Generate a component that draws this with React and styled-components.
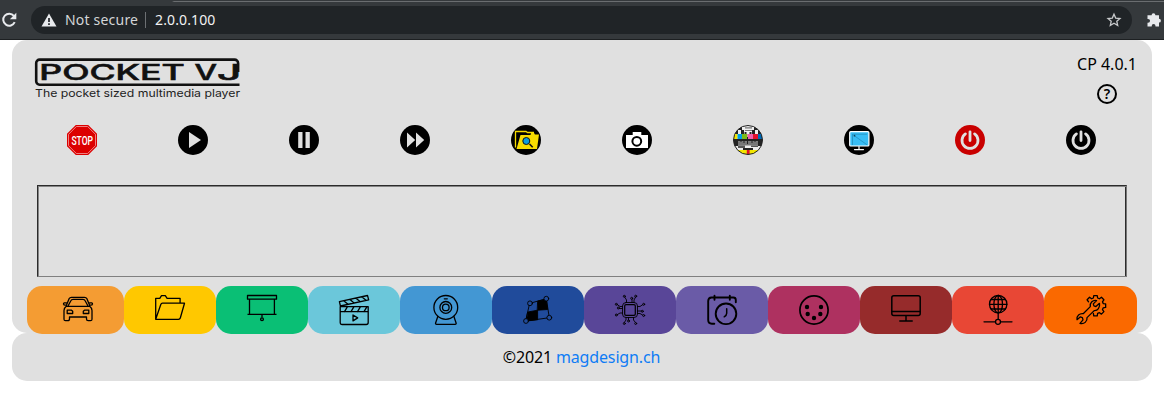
import React from "react";
import styled, { createGlobalStyle } from "styled-components";

const GlobalStyle = createGlobalStyle`
  * { box-sizing: border-box; }
  body { margin: 0; background: #fff; color: #000; font-family: "Noto Sans", "Open Sans", sans-serif; font-size: 16px; }
  svg { display: block; flex: none; overflow: visible; }
`;

const BrowserBar = styled.div`
  height: 40px;
  display: flex;
  align-items: flex-start;
  padding-top: 6px;
  background: linear-gradient(to right, #35393c 172px, #6a6d70 174px) 0 1px / 100% 1px no-repeat, #35393c;
  border-bottom: 1px solid #1d2022;
  color: #e8eaed;
`;
const ReloadSlot = styled.div`
  width: 31px;
  padding: 5px 0 0 0;
`;
const AddressPill = styled.div`
  width: 1101px;
  height: 28px;
  border-radius: 14px;
  background: #202427;
  display: flex;
  align-items: center;
  padding: 0 11px 0 10px;
  font-size: 14px;
  line-height: 28px;
`;
const Security = styled.span`
  width: 73px;
  margin-left: 8px;
  letter-spacing: 0.2px;
  color: #d3d5d7;
  white-space: nowrap;
`;
const Divider = styled.span`
  width: 1px;
  height: 16px;
  margin: 0 9px 0 7px;
  background: #6d7073;
`;
const Address = styled.span`
  flex: 1;
  letter-spacing: 0.12px;
  color: #f1f2f3;
`;
const ExtensionSlot = styled.div`
  padding: 6px 0 0 14px;
`;

const Page = styled.main`
  margin: 0 12px;
`;
const Panel = styled.section`
  height: 293px;
  border-radius: 15px;
  background: #e0e0e0;
  padding: 0 15px;
`;
const Header = styled.header`
  height: 85px;
  display: flex;
  justify-content: space-between;
  padding: 18px 0 0 8px;
`;
const Info = styled.div`
  display: flex;
  flex-direction: column;
  align-items: flex-end;
  margin-top: -5px;
  line-height: 22px;
`;
const HelpButton = styled.button`
  margin: 9px 20px 0 0;
  padding: 0;
  border: 0;
  background: none;
`;
const Toolbar = styled.nav`
  width: 1110px;
  margin-left: -0.5px;
  display: grid;
  grid-template-columns: repeat(10, 1fr);
  justify-items: center;
`;
const ToolButton = styled.button`
  width: 30px;
  height: 30px;
  padding: 0;
  border: 0;
  background: none;
`;
const Screen = styled.div`
  width: 1090px;
  height: 92px;
  margin: 30px 0 9px 10px;
  border-style: solid;
  border-width: 1px;
  border-color: #2c2c2c #777 #808080 #2c2c2c;
  box-shadow: inset 1px 1px 0 #858585, inset -1px 0 0 #2c2c2c;
`;
const Tabs = styled.nav`
  position: relative;
  z-index: 1;
  width: 1110px;
  display: flex;
`;
const Tab = styled.button`
  flex: 0 0 ${(p) => p.$width || 92}px;
  height: 48px;
  display: flex;
  justify-content: center;
  padding: 9px 0 0 ${(p) => p.$inset || 0}px;
  border: 0;
  border-radius: 15px;
  background: ${(p) => p.$color};
`;
const Footer = styled.footer`
  height: 48px;
  border-radius: 15px;
  background: #e0e0e0;
  text-align: center;
  line-height: 48px;
  letter-spacing: -0.15px;
  padding-right: 1px;
`;
const Link = styled.a`
  color: #0f7cf5;
  text-decoration: none;
`;

const Glyph = ({ children, sw = 1.3 }) => (
  <svg width="30" height="30" viewBox="0 0 30 30" fill="none" stroke="#000" strokeWidth={sw} strokeLinejoin="round" strokeLinecap="round">
    {children}
  </svg>
);
const Badge = ({ children, color = "#000" }) => (
  <svg width="30" height="30" viewBox="0 0 30 30">
    <circle cx="15" cy="15" r="15" fill={color} />
    {children}
  </svg>
);

const Logo = () => (
  <svg width="206" height="44" viewBox="0 0 206 44">
    <path d="M204.500 26.700H4.600a3.400 3.400 0 0 1-3.400-3.400V5a3.400 3.400 0 0 1 3.400-3.400H199.500a3.600 3.600 0 0 1 3.600 3.600V14" fill="none" stroke="#111" strokeWidth="2.600" />
    <g fill="#111" stroke="#111" strokeWidth=".55" fontFamily="Inter, sans-serif" fontSize="20.800" fontWeight="500">
      <text x="4.300" y="22" textLength="145.500" lengthAdjust="spacingAndGlyphs">POCKET</text>
      <text x="159.500" y="22" textLength="22.500" lengthAdjust="spacingAndGlyphs">V</text>
      <text x="182" y="22" textLength="24.300" lengthAdjust="spacingAndGlyphs">J</text>
    </g>
    <text x="0" y="38.800" fill="#222" fontFamily="Inter, sans-serif" fontSize="10.800" textLength="205" lengthAdjust="spacingAndGlyphs">The pocket sized multimedia player</text>
  </svg>
);

const Power = () => (
  <path d="M10.400 8.900a8 8 0 1 0 9.200 0M15 6.800v8.700" fill="none" stroke="#e0e0e0" strokeWidth="2.800" strokeLinecap="round" />
);

const tools = [
  ["Stop", <svg width="30" height="30" viewBox="0 0 30 30">
    <path d="M8.800 0h12.400L30 8.800v12.400L21.200 30H8.800L0 21.200V8.800z" fill="#dc0000" />
    <path d="M9.400 1.500h11.200l7.900 7.900v11.200l-7.900 7.900H9.400l-7.900-7.900V9.400z" fill="none" stroke="#f4a0a0" strokeWidth=".8" />
    <text x="4.400" y="19.600" textLength="21.600" lengthAdjust="spacingAndGlyphs" fill="#fff" fontFamily="Roboto, sans-serif" fontSize="12.600" fontWeight="500">STOP</text>
  </svg>],
  ["Play", <Badge><path d="M11 7l12 8-12 8z" fill="#e0e0e0" /></Badge>],
  ["Pause", <Badge><path d="M9.200 7h4.300v16H9.200zM16.500 7h4.300v16h-4.300z" fill="#e0e0e0" /></Badge>],
  ["Next", <Badge><path d="M7 7.500l8.200 7.500L7 22.500zM16 7.500l8.200 7.500-8.200 7.500z" fill="#e0e0e0" /></Badge>],
  ["Browse", <Badge>
    <path d="M4.500 22.500V6.500H15l1.500 1H23" fill="none" stroke="#f7dc00" strokeWidth="1.300" />
    <path d="M9.500 10h10l.6-2h3l.8 1.600H28L26 24H5.500z" fill="#f7dc00" />
    <path d="M18.500 19l3.200 3.200" stroke="#111" strokeWidth="1.600" />
    <circle cx="15.300" cy="16" r="3.500" fill="#0d9ddb" stroke="#111" strokeWidth="1" />
  </Badge>],
  ["Snapshot", <Badge>
    <path d="M4 10h6.700V7h8.600v3H26v13H4z" fill="#fff" />
    <circle cx="14.800" cy="16.300" r="4.400" fill="#fff" stroke="#000" strokeWidth="2" />
  </Badge>],
  ["Test pattern", <svg width="30" height="30" viewBox="0 0 30 30">
    <defs><clipPath id="tv"><circle cx="15" cy="15" r="14.500" /></clipPath></defs>
    <g clipPath="url(#tv)">
      <rect width="30" height="30" fill="#eee" />
      <path d="M0 5h5v4H0zM8 5h3v4H8zM19 5h3v4h-3zM25 5h5v4h-5zM5 2h4v3H5zM21 2h4v3h-4zM11.500 7h2v2h-2zM16.500 7h2v2h-2z" fill="#222" />
      <path d="M12 2.200h7v1.400h-7zM12 5h7v1h-7z" fill="#777" />
      <path d="M0 9h4.500v5H0z" fill="#f3e600" /><path d="M4.500 9H9v5H4.500z" fill="#009fe3" />
      <path d="M9 9h5.500v5H9z" fill="#7aba18" /><path d="M14.500 9H20v5h-5.500z" fill="#ed5fac" />
      <path d="M20 9h5v5h-5z" fill="#e2102a" /><path d="M25 9h5v5h-5z" fill="#0069b4" />
      <path d="M0 14h30v2.500H0zM0 16.500h5V21H0zM25 16.500h5V21h-5z" fill="#242424" />
      <path d="M5 16.500h20v4H5z" fill="#777" />
      <path d="M14.500 12v7M8 14v3M11 14v4M19 14v4M22 14v3" stroke="#222" strokeWidth="1" />
      <path d="M5 20.500h7V23H5zM18 20.500h7V22h-7z" fill="#555" />
      <path d="M10 23h10v2H10z" fill="#222" />
      <path d="M3 25h24v5H3z" fill="#f3e600" /><path d="M13.800 25h2.800v5h-2.800z" fill="#e2102a" />
    </g>
    <circle cx="15" cy="15" r="14.500" fill="none" stroke="#222" />
  </svg>],
  ["Display", <Badge>
    <rect x="5.700" y="6.700" width="19.200" height="14.300" rx="1" fill="#38bdf5" stroke="#fff" strokeWidth="1.200" />
    <path d="M8.500 20V9.200H23M10 10.500l13 9.300" fill="none" stroke="#126b91" strokeWidth=".45" />
    <circle cx="10.500" cy="10.700" r=".9" fill="#114760" />
    <path d="M15 21.500v2.500M10.500 24.600h9" stroke="#fff" strokeWidth="1.200" strokeLinecap="round" />
  </Badge>],
  ["Reboot", <Badge color="#c90000"><Power /></Badge>],
  ["Shut down", <Badge><Power /></Badge>],
];

const gear = Array.from({ length: 8 }, (_, i) => {
  const a = (i * Math.PI) / 4 - Math.PI / 2;
  return [[-0.27, 8], [-0.17, 10.3], [0.17, 10.3], [0.27, 8]]
    .map(([d, r]) => `${(19.5 + r * Math.cos(a + d)).toFixed(2)} ${(10.7 + r * Math.sin(a + d)).toFixed(2)}`);
});
const gearPath = "M" + [7, 0, 1, 2, 3, 4].flatMap((i) => gear[i]).join("L");

const tabs = [
  ["Car", "#f49c33", <Glyph>
    <path d="M3.300 10.500L6.200 3.600Q6.800 2.300 8.500 2.300h13q1.700 0 2.300 1.300l2.900 6.900M5 11L8 5.500Q8.400 4.300 10 4.300h10q1.600 0 2 1.200L25 11M3.300 11.300h23.400M3.500 7.800H1.200Q.3 8 .5 9.200q.2 1 2 1M26.500 7.800h2.300q.9.200.7 1.400-.2 1-2 1M3.300 11.300Q1 13 1 15.500v8.700q0 1.500 1.500 1.500h2.300q1.700 0 1.700-1.700v-2h17v2q0 1.700 1.700 1.700h2.300q1.500 0 1.500-1.500v-8.700q0-2.500-2.300-4.200" />
    <path d="M4.200 15.200h4.300l1.200 1v2.300H4.200zM25.800 15.200h-4.300l-1.200 1v2.300h5.500z" />
  </Glyph>, 97, 4],
  ["Folder", "#ffc800", <Glyph><path d="M.7 24.300V3.300h4.100l1.700-2.600h3.800l1.800 2.600h13v4.800M.7 24.300L5.700 9.700Q6.200 8.200 7.500 8.200h22L25.300 23q-.4 1.300-1.800 1.300z" /></Glyph>],
  ["Projector", "#0abf75", <Glyph>
    <path d="M.5.500h29v3.700H.5zM2.500 4.300v15M27.400 4.300v15M.5 19.300h29M15 19.500v3" strokeLinecap="butt" /><circle cx="15" cy="24.200" r="1.400" />
  </Glyph>],
  ["Movies", "#6bc7da", <Glyph>
    <path d="M.4 6.700L28.500.5l1.200 4.300L1.400 11zM1.200 11.700h28v15.800q0 2-2 2h-24q-2 0-2-2zM1.200 16.700h28M5 6l4 3.300M11 4.500L15 8M17 3.200l4 3.300M23 2l4 3.300M8.500 11.700l-3 5M15 11.700l-3 5M21.500 11.700l-3 5M28 11.700l-3 5M14 20l4.700 2.900-4.700 3z" />
  </Glyph>],
  ["Webcam", "#4397d3", <Glyph>
    <circle cx="14.800" cy="12.400" r="11.900" /><circle cx="14.800" cy="12.400" r="5.900" /><circle cx="14.800" cy="12.400" r="3.300" />
    <path d="M13.300 3.800h3M6.800 21.500L4.600 28q-.4 1.300 1 1.300h18.500q1.400 0 1-1.300l-2.200-6.500" />
  </Glyph>],
  ["Mapping", "#204b9b", <Glyph sw={0.9}>
    <path d="M7 8.300L23.300 3.700l3 19L3 26z" /><path d="M15 6l8.300-1.800 1.300 10.300-10 .7zM5 17l9.600-1.800v9.600L3.300 26z" fill="#000" />
    {[[7, 8.3], [23.3, 3.7], [26.3, 22.7], [3, 26]].map(([x, y]) => <circle key={x} cx={x} cy={y} r="2.400" fill="#204b9b" />)}
  </Glyph>],
  ["Hardware", "#594698", <Glyph sw={0.9}>
    <rect x="7.500" y="7.500" width="15" height="15" rx="3.500" /><rect x="9.700" y="9.700" width="10.600" height="10.600" rx="1.300" strokeWidth="1.200" />
    <path d="M11.500 7.500V5L10 2.500M17 7.500V4.300M19 7.500V5l1.500-2.800M13.500 22.500V25M11 22.500V25l-1.500 2.200M18.500 22.500V25l1.700 2.200M7.500 11.500H5L2.500 9.800M7.500 13.500H4.500M7.500 18H5l-2.500 1.500M22.500 11.500H25l2.500-1.700M22.500 16h3.700M22.500 18.500H25l2.500 1.500" />
    {[[9.3, 1.3], [20.7, 1.2], [16.7, 3.3], [1.3, 9.3], [3.3, 13], [1.3, 20], [28.7, 9.3], [27.3, 16.3], [28.7, 20.5], [9.3, 28.5], [13.5, 26], [20.7, 28.5]].map(([x, y]) => <circle key={x + "-" + y} cx={x} cy={y} r="1" />)}
  </Glyph>],
  ["Schedule", "#6a5ba7", <Glyph sw={1.9}>
    <path d="M28.800 7.200V5q0-2.500-2.500-2.500H4.500Q1.200 2.500 1.200 6v19q0 3.700 3.700 3.700h2.400M7.500.8v4M22.800.8v4" /><circle cx="19" cy="18.800" r="10.300" /><path d="M19.700 13.700v4.500q0 2-2.500 3.600" strokeWidth="1.500" />
  </Glyph>],
  ["MIDI", "#ae3160", <Glyph sw={1.7}>
    <circle cx="15" cy="15" r="14.100" />
    <g fill="#000" stroke="none">{[[8, 12], [22, 12], [8.7, 19], [21.3, 19], [15, 23]].map(([x, y]) => <circle key={x} cx={x} cy={y} r="2.200" />)}</g>
  </Glyph>],
  ["Screen", "#962b2b", <Glyph sw={1.5}><rect x=".8" y=".8" width="28.400" height="19.800" rx="2" /><path d="M1 16.500h28M15 21v5M8.800 26h12.400" /></Glyph>],
  ["Network", "#e84735", <Glyph>
    <circle cx="15.200" cy="9.200" r="8.700" /><ellipse cx="15.200" cy="9.200" rx="4.300" ry="8.700" />
    <path d="M15.200.5v23.800M6.500 9.300h17.400M8 4.500h14.400M8 14h14.400M1 26.800h11.500M17.500 26.800H29" /><circle cx="15" cy="26.800" r="2.500" />
  </Glyph>],
  ["Setup", "#fa6900", <Glyph>
    <path d={gearPath} />
    <path d="M23.500 8.300l-3.600 3.300-2-.7-.6-2 3.300-3.300c-3.600-.9-7 2-6.300 6L7.200 18.700c-3.500-.6-6.800 2.300-6.200 6l3.200-2.800 2.200.7.600 2.300-3 3.500c4 1.200 7.600-2 7-5.800l7.200-7c3.500.3 6-3.300 5.300-7.300z" fill="#fa6900" />
  </Glyph>, 93],
];

export default function App() {
  return (
    <>
      <GlobalStyle />
      <BrowserBar>
        <ReloadSlot>
          <svg width="18" height="18" viewBox="0 0 18 18" fill="none" stroke="#e8eaed" strokeWidth="2">
            <path d="M14.700 11.200a6 6 0 1 1-.8-6.300" /><path d="M16.300 1.800v6.400H9.900z" fill="#e8eaed" stroke="none" />
          </svg>
        </ReloadSlot>
        <AddressPill>
          <svg width="16" height="14" viewBox="0 0 16 14"><path d="M8 .5L15.500 13.500H.5z" fill="#e8eaed" /><path d="M8 5v4M8 10.200v1.800" stroke="#202427" strokeWidth="1.700" /></svg>
          <Security>Not secure</Security>
          <Divider />
          <Address>2.0.0.100</Address>
          <svg width="14" height="14" viewBox="0 0 14 14"><path d="M7 1.200l1.700 3.900 4.300.4-3.200 2.800.9 4.200L7 10.300l-3.700 2.200.9-4.200L1 5.500l4.300-.4z" fill="none" stroke="#c8cacc" strokeWidth="1.300" /></svg>
        </AddressPill>
        <ExtensionSlot>
          <svg width="16" height="16" viewBox="0 0 16 16" fill="#e8eaed"><path d="M2 3.200h3.600a1.900 1.900 0 0 1 3.800 0h3.600v3.600a1.900 1.900 0 0 1 0 3.800v3.900H9.500v-.6a1.900 1.900 0 0 0-3.800 0v.6H1.500v-3.700h.6a1.900 1.900 0 0 0 0-3.900h-.6V3.200z" /></svg>
        </ExtensionSlot>
      </BrowserBar>
      <Page>
        <Panel>
          <Header>
            <Logo />
            <Info>
              CP 4.0.1
              <HelpButton aria-label="Help">
                <svg width="20" height="20" viewBox="0 0 20 20">
                  <circle cx="10" cy="10" r="9" fill="none" stroke="#000" strokeWidth="2" />
                  <text x="10" y="14.900" textAnchor="middle" fontFamily="Noto Sans, sans-serif" fontSize="14" fontWeight="600">?</text>
                </svg>
              </HelpButton>
            </Info>
          </Header>
          <Toolbar>
            {tools.map(([name, icon]) => <ToolButton key={name} aria-label={name}>{icon}</ToolButton>)}
          </Toolbar>
          <Screen />
          <Tabs>
            {tabs.map(([name, color, icon, width, inset]) => (
              <Tab key={name} aria-label={name} $color={color} $width={width} $inset={inset}>{icon}</Tab>
            ))}
          </Tabs>
        </Panel>
        <Footer>©2021 <Link href="#">magdesign.ch</Link></Footer>
      </Page>
    </>
  );
}
